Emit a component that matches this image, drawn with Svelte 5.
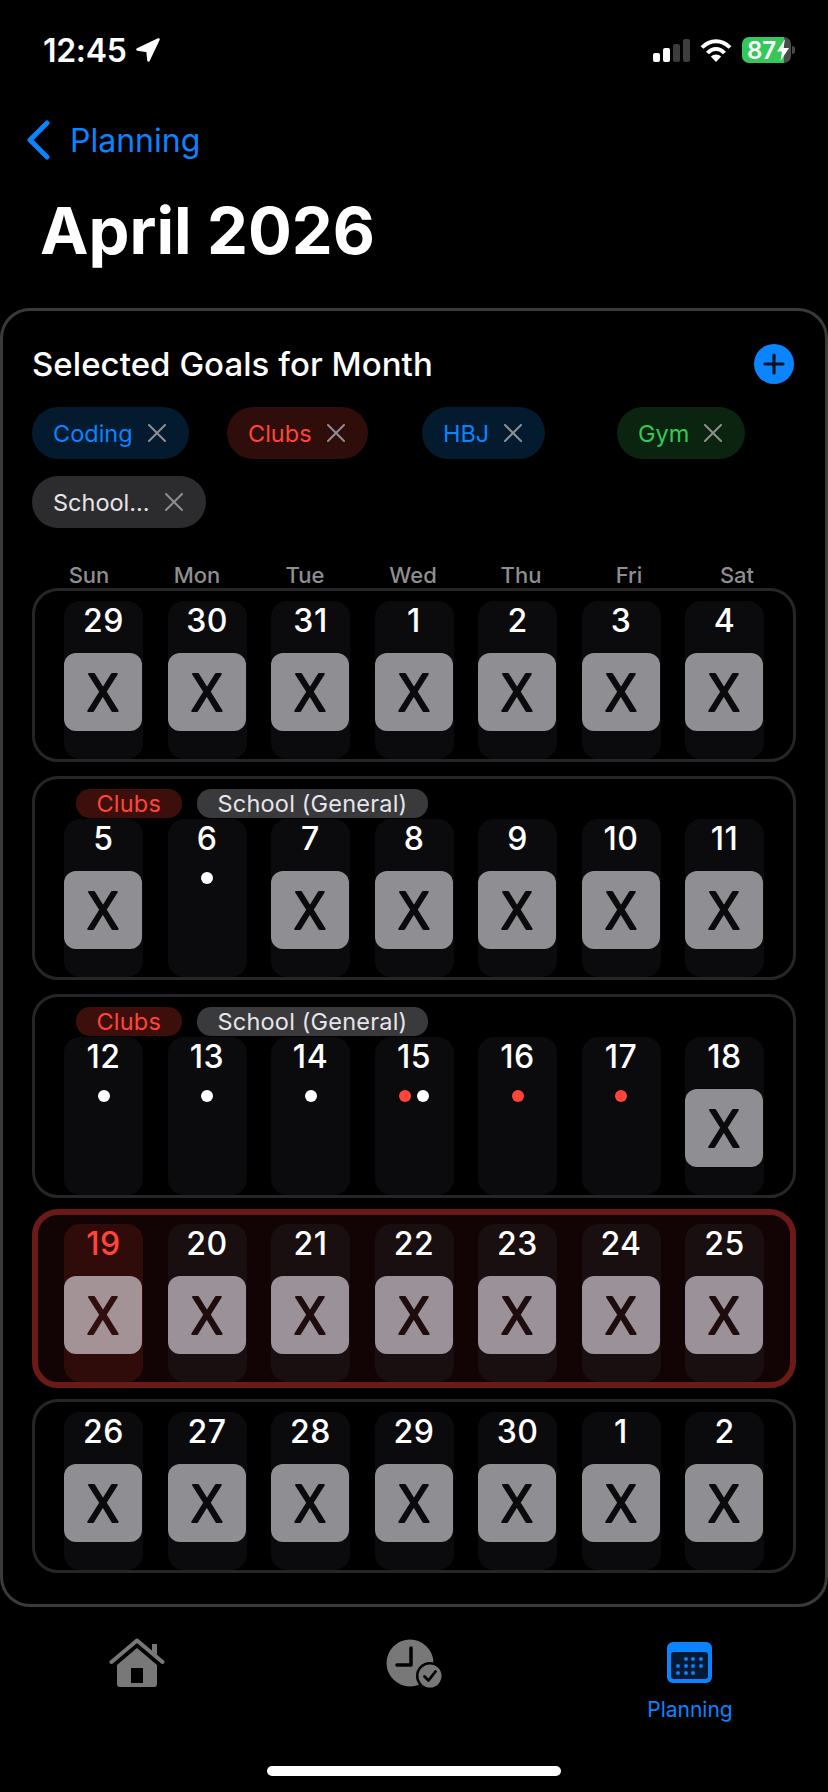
<script>
  // Month planning screen: goal chips, week rows, tab bar
  const goals = [
    { name: 'Coding', tone: 'blue' },
    { name: 'Clubs', tone: 'red' },
    { name: 'HBJ', tone: 'blue' },
    { name: 'Gym', tone: 'green' },
    { name: 'School…', tone: 'gray' },
  ];

  const weekdays = ['Sun', 'Mon', 'Tue', 'Wed', 'Thu', 'Fri', 'Sat'];
  const tags = [
    { name: 'Clubs', tone: 'red' },
    { name: 'School (General)', tone: 'gray' },
  ];

  // a day is either crossed out or carries a list of coloured dots
  const x = (n) => ({ n, crossed: true });
  const d = (n, ...dots) => ({ n, dots });

  const weeks = [
    { days: [29, 30, 31, 1, 2, 3, 4].map(x) },
    { tags, days: [x(5), d(6, 'white'), x(7), x(8), x(9), x(10), x(11)] },
    {
      tags,
      days: [
        d(12, 'white'),
        d(13, 'white'),
        d(14, 'white'),
        d(15, 'red', 'white'),
        d(16, 'red'),
        d(17, 'red'),
        x(18),
      ],
    },
    { current: true, days: [19, 20, 21, 22, 23, 24, 25].map(x) },
    { days: [26, 27, 28, 29, 30, 1, 2].map(x) },
  ];

  const calendarDots = [
    [686, 1659], [693, 1659], [701, 1659],
    [678, 1666], [686, 1666], [693, 1666], [701, 1666],
    [678, 1673], [686, 1673], [693, 1673],
  ];
</script>

<div class="screen">
  <div class="status">
    <div class="time">
      <span>12:45</span>
      <svg width="24" height="24" viewBox="0 0 24 24">
        <path d="M22.5 1.5 1.5 11.5 11.5 13 12.5 22.5Z" fill="#fff" stroke="#fff" stroke-width="2.5" stroke-linejoin="round" />
      </svg>
    </div>
    <div class="indicators">
      <div class="signal">
        <i class="b1"></i><i class="b2"></i><i class="b3"></i><i class="b4"></i>
      </div>
      <svg width="32" height="24" viewBox="0 0 32 24" fill="none" stroke="#fff" stroke-width="4">
        <path d="M2 9.5C10 1 22 1 30 9.5" />
        <path d="M7.5 15C12.5 9.5 19.5 9.5 24.5 15" />
        <path d="M16 24 10.8 18.6C13.5 15.8 18.5 15.8 21.2 18.6Z" fill="#fff" stroke="none" />
      </svg>
      <div class="battery">
        <div class="cell">
          <span>87</span>
          <svg width="12" height="22" viewBox="0 0 12 22">
            <path d="M8 0 0 12.5H5L3.5 22 12 9H6.5Z" fill="#fff" />
          </svg>
        </div>
        <i class="cap"></i>
      </div>
    </div>
  </div>

  <div class="nav">
    <svg width="26" height="40" viewBox="0 0 26 40" fill="none" stroke="#0a84ff" stroke-width="5" stroke-linecap="round" stroke-linejoin="round">
      <path d="M22 3 5 20 22 37" />
    </svg>
    <span>Planning</span>
  </div>

  <h1>April 2026</h1>

  <section class="card">
    <div class="card-head">
      <h2>Selected Goals for Month</h2>
      <button class="add" aria-label="Add goal">
        <svg width="22" height="22" viewBox="0 0 22 22" stroke="#06121f" stroke-width="3.2" stroke-linecap="round">
          <path d="M11 2V20M2 11H20" />
        </svg>
      </button>
    </div>

    <div class="goals">
      {#each goals as goal}
        <div class="goal {goal.tone}">
          <span>{goal.name}</span>
          <svg width="18" height="18" viewBox="0 0 18 18" stroke="#8e8e93" stroke-width="2" stroke-linecap="round">
            <path d="M1 1 17 17M17 1 1 17" />
          </svg>
        </div>
      {/each}
    </div>

    <div class="weekdays">
      {#each weekdays as name}
        <span>{name}</span>
      {/each}
    </div>

    <div class="weeks">
      {#each weeks as week}
        <div class="week" class:current={week.current}>
          {#if week.tags}
            <div class="tags">
              {#each week.tags as tag}
                <span class="tag {tag.tone}">{tag.name}</span>
              {/each}
            </div>
          {/if}
          <div class="days">
            {#each week.days as day, i}
              <div class="day" class:today={week.current && i === 0}>
                <div class="num">{day.n}</div>
                {#if day.crossed}
                  <div class="box">
                    <svg width="78" height="78" viewBox="0 0 78 78">
                      <text x="39" y="57.500">X</text>
                    </svg>
                  </div>
                {:else}
                  <div class="dots">
                    {#each day.dots as dot}
                      <i class={dot}></i>
                    {/each}
                  </div>
                {/if}
              </div>
            {/each}
          </div>
        </div>
      {/each}
    </div>
  </section>

  <nav class="tabs">
    <div class="tab">
      <svg width="58" height="50" viewBox="109 1638 58 50">
        <path d="M117 1665 137 1648 157 1665V1684A3 3 0 0 1 154 1687H120A3 3 0 0 1 117 1684ZM131 1668V1683H143V1668Z" fill="#787878" fill-rule="evenodd" />
        <path d="M111.500 1662 137 1640.500 162.500 1662" fill="none" stroke="#787878" stroke-width="4" stroke-linecap="round" stroke-linejoin="round" />
        <path d="M152 1644H157V1655L152 1651Z" fill="#787878" />
      </svg>
    </div>
    <div class="tab">
      <svg width="58" height="50" viewBox="385 1638 58 50">
        <circle cx="410" cy="1663" r="23.500" fill="#787878" />
        <path d="M411 1648V1665H397" fill="none" stroke="#000" stroke-width="3.500" stroke-linecap="round" stroke-linejoin="round" />
        <circle cx="430" cy="1676" r="14" fill="#000" />
        <circle cx="430" cy="1676" r="11.500" fill="#787878" />
        <path d="M424.500 1676.500 428.500 1680.500 435.500 1671.500" fill="none" stroke="#000" stroke-width="2.800" stroke-linecap="round" stroke-linejoin="round" />
      </svg>
    </div>
    <div class="tab active">
      <svg width="46" height="42" viewBox="667 1642 46 42">
        <rect x="667" y="1642" width="45" height="41" rx="6" fill="#0a84ff" />
        <rect x="671" y="1652" width="37" height="27" rx="3" fill="#041a33" />
        {#each calendarDots as [cx, cy]}
          <rect x={cx - 1.75} y={cy - 1.75} width="3.500" height="3.500" rx="1" fill="#0a84ff" />
        {/each}
      </svg>
      <span>Planning</span>
    </div>
  </nav>

  <div class="home-bar"></div>
</div>

<style>
  :global(body) {
    margin: 0;
    background: #000;
  }

  .screen {
    width: 828px;
    height: 1792px;
    overflow: hidden;
    background: #000;
    color: #fff;
    font-family: Inter, "Liberation Sans", sans-serif;
    display: flex;
    flex-direction: column;
  }

  /* status bar */
  .status {
    height: 100px;
    flex-shrink: 0;
    padding: 0 33px 0 43px;
    box-sizing: border-box;
    display: flex;
    align-items: center;
    justify-content: space-between;
  }

  .time {
    display: flex;
    align-items: center;
    gap: 9px;
    font-size: 32px;
    font-weight: 600;
    letter-spacing: -0.3px;
  }

  .indicators {
    display: flex;
    align-items: center;
    gap: 10px;
  }

  .signal {
    display: flex;
    align-items: flex-end;
    gap: 2.5px;
    height: 23px;
  }

  .signal i {
    width: 7.500px;
    border-radius: 2px;
    background: #fff;
  }

  .signal .b1 { height: 9px; }
  .signal .b2 { height: 14px; }
  .signal .b3 { height: 18px; background: #3d3d3d; }
  .signal .b4 { height: 23px; background: #3d3d3d; }

  .battery {
    display: flex;
    align-items: center;
    gap: 1px;
  }

  .cell {
    width: 49px;
    height: 26px;
    border-radius: 7px;
    box-sizing: border-box;
    padding-left: 5px;
    display: flex;
    align-items: center;
    gap: 1px;
    background: linear-gradient(90deg, #34c759 0 42px, #4a4a4a 42px);
    font-size: 24px;
    font-weight: 600;
  }

  .cap {
    width: 3px;
    height: 8px;
    border-radius: 0 3px 3px 0;
    background: #4a4a4a;
  }

  /* header */
  .nav {
    height: 44px;
    margin-top: 18px;
    padding-left: 25px;
    display: flex;
    align-items: center;
    gap: 19px;
    color: #0a84ff;
    font-size: 32px;
  }

  h1 {
    margin: 29px 0 0 40px;
    font-size: 65px;
    line-height: 80px;
    font-weight: 700;
  }

  /* card */
  .card {
    margin-top: 37px;
    border: 3px solid #3a3a3c;
    border-radius: 30px;
    padding: 33px 29px 32px;
    box-sizing: border-box;
    flex-shrink: 0;
    height: 1299px;
  }

  .card-head {
    display: flex;
    align-items: center;
    justify-content: space-between;
    height: 40px;
    padding-right: 2px;
  }

  h2 {
    margin: 0;
    font-size: 33px;
    font-weight: 500;
    letter-spacing: 0.05px;
  }

  .add {
    width: 40px;
    height: 40px;
    border: none;
    border-radius: 50%;
    padding: 0;
    background: #0a84ff;
    display: flex;
    align-items: center;
    justify-content: center;
  }

  .goals {
    margin-top: 23px;
    display: grid;
    grid-template-columns: repeat(4, 179px);
    gap: 17px 16px;
    justify-items: start;
  }

  .goal {
    height: 52px;
    border-radius: 26px;
    padding: 0 23px 0 21px;
    display: flex;
    align-items: center;
    gap: 15px;
    font-size: 23.500px;
  }

  .blue { background: #031a2f; color: #0a84ff; }
  .red { background: #2e0d0b; color: #ff453a; }
  .green { background: #0b2410; color: #34c759; }
  .gray { background: #2c2c2e; color: #e5e5ea; }

  .weekdays {
    margin: 34px 3px 0;
    height: 25.500px;
    display: grid;
    grid-template-columns: repeat(7, 108px);
    justify-items: center;
    align-items: center;
    font-size: 22px;
    font-weight: 500;
    color: #8e8e93;
  }

  /* weeks */
  .week {
    margin-top: 14px;
    border: 3px solid #262628;
    border-radius: 26px;
    padding: 10px 29px 0;
    overflow: hidden;
  }

  .weeks .week:first-child {
    margin-top: 0;
  }

  .week.current {
    margin-top: 11px;
    border: 6px solid #6b1a17;
    padding: 9px 26px 0;
    background: #120304;
  }

  .week.current + .week {
    margin-top: 11px;
  }

  .tags {
    height: 30px;
    padding-left: 12px;
    display: flex;
    align-items: flex-start;
    gap: 15px;
  }

  .tag {
    height: 29px;
    padding: 0 21px 0 20.500px;
    border-radius: 14px;
    font-size: 23.500px;
    letter-spacing: 0.2px;
    line-height: 29px;
  }

  .tag.red { background: #3c0f0c; }
  .tag.gray { background: #3a3a3c; }

  .days {
    display: grid;
    grid-template-columns: repeat(7, 79px);
    column-gap: 24.500px;
  }

  .day {
    height: 158px;
    border-radius: 16px;
    background: #0b0b0d;
  }

  .current .day {
    background: #1a0f10;
  }

  .current .day.today {
    background: #2f0c0a;
  }

  .num {
    height: 38px;
    line-height: 40px;
    text-align: center;
    font-size: 32px;
    font-weight: 500;
    letter-spacing: 0.5px;
  }

  .today .num {
    color: #ff453a;
  }

  .box {
    width: 78px;
    height: 78px;
    margin-top: 14px;
    border-radius: 12px;
    background: #8e8e93;
  }

  .box svg {
    display: block;
  }

  .box text {
    font-family: "Noto Sans", Inter, sans-serif;
    font-size: 51px;
    font-weight: 400;
    text-anchor: middle;
    fill: #0b0b0d;
    stroke: #0b0b0d;
    stroke-width: 2px;
    stroke-linejoin: round;
  }

  .current .box {
    background: #9a9298;
  }

  .current .box text {
    fill: #1e0c0e;
    stroke: #1e0c0e;
  }

  .current .today .box {
    background: #a39397;
  }

  .current .today .box text {
    fill: #300f0e;
    stroke: #300f0e;
  }

  .dots {
    margin-top: 15px;
    display: flex;
    justify-content: center;
    gap: 6px;
  }

  .dots i {
    width: 12px;
    height: 12px;
    border-radius: 50%;
  }

  .dots .white { background: #fff; }
  .dots .red { background: #ff453a; }

  /* tab bar */
  .tabs {
    display: grid;
    grid-template-columns: repeat(3, 276px);
    padding-top: 31px;
    justify-items: center;
    height: 159px;
    flex-shrink: 0;
    box-sizing: border-box;
  }

  .tab {
    display: flex;
    flex-direction: column;
    align-items: center;
  }

  .tab svg {
    display: block;
  }

  .tab.active {
    padding-top: 4px;
  }

  .tab.active span {
    margin-top: 13px;
    font-size: 21px;
    line-height: 26px;
    color: #0a84ff;
  }

  .home-bar {
    width: 294px;
    height: 10px;
    margin: 0 auto;
    border-radius: 5px;
    background: #fff;
    flex-shrink: 0;
  }
</style>
